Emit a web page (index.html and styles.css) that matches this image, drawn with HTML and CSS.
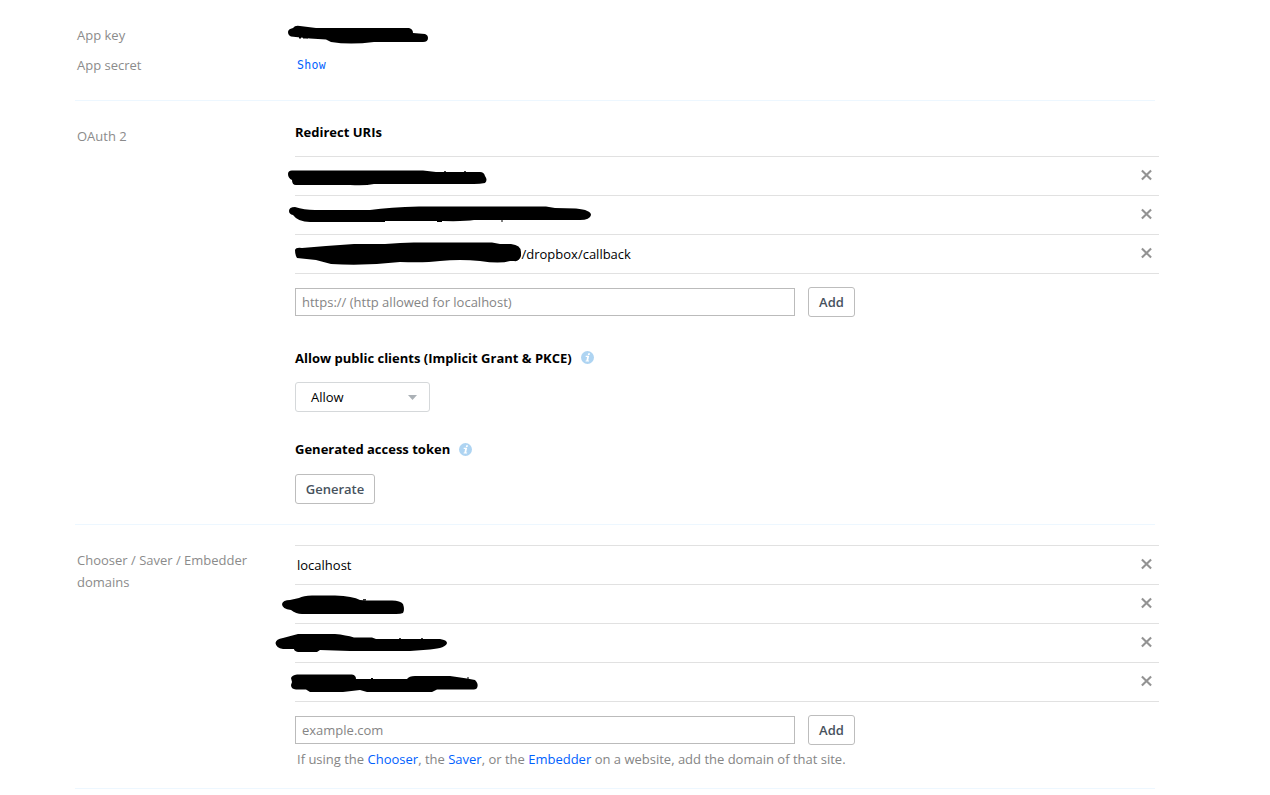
FILE: index.html
```html
<!DOCTYPE html>
<html lang="en">
<head>
<meta charset="utf-8">
<title>App settings</title>
<link rel="stylesheet" href="styles.css">
</head>
<body>
<svg class="defs" width="0" height="0">
  <symbol id="close" viewBox="0 0 13 12"><path d="M1.9 1.4 11.1 10.6M11.1 1.4 1.9 10.6" fill="none" stroke="#939393" stroke-width="2.1"/></symbol>
  <symbol id="info" viewBox="0 0 13 13"><circle cx="6.5" cy="6.5" r="6.5" fill="#aed4f2"/><path d="M7.2 2.200h1.800l-.4 1.800H6.800zM4.800 4.800h3.400L7.200 9.400h1l-.2 1.200H4.500l.2-1.200h.7l.7-3.400H4.600z" fill="#fff"/></symbol>
</svg>
<main class="settings">
  <section class="section section-keys">
    <div class="field">
      <div class="label">App key</div>
      <div class="value redacted">
        <svg class="mark" viewBox="270 20 370 30"><path d="M288 32Q288 29 293 28Q295 25 300 26L316 28H409Q413 29 413 33L425 34Q428 35 428 38Q428 42 423 42H374Q350 45 331 42L326 39.500L310 38.500L291 36.500Q288 35 288 32Z"/><path d="M299 37h2v1.500h-2zM303 37h5v1.500h-5z"/></svg>
      </div>
    </div>
    <div class="field">
      <div class="label">App secret</div>
      <div class="value"><a class="show" href="#">Show</a></div>
    </div>
  </section>

  <section class="section section-oauth">
    <div class="label">OAuth 2</div>
    <div class="content">
      <h3 class="heading">Redirect URIs</h3>
      <ul class="list">
        <li class="item redacted">
          <svg class="mark" viewBox="270 157 370 38"><path d="M288 174Q288 170 293 170.500H423L436 172H480Q484 172 485 176Q488 180 485 183Q480 184 474 184L374 184Q365 186 350 185H296Q292 185 292 180Q288 178 288 174Z"/><path d="M444 171.300h2v1h-2zM464 171.300h2v1h-2z"/></svg>
          <svg class="close"><use href="#close"/></svg>
        </li>
        <li class="item redacted">
          <svg class="mark" viewBox="270 196 370 38"><path d="M289 211Q289 207 295 207Q304 210 315 210H370Q390 207 419 206.500H546L555 208L576 208.500Q591 210 591 215Q590 220 580 220H474Q465 221.500 443 221H385L380 222H310Q298 222 293 215Q289 214 289 211Z"/><path d="M501.500 219h1v3h-1zM437 220h5v2h-5zM380 220h5v2h-5z"/></svg>
          <svg class="close"><use href="#close"/></svg>
        </li>
        <li class="item redacted">
          <svg class="mark" viewBox="270 235 370 38"><path d="M295 250Q296 247 302 248L326 246L354 244H385Q405 242 420 242.500H492L500 244H511Q521 245 521 252V256Q519 262 514 261L510 261Q500 264 480 261Q460 259 440 261Q425 263 400 262Q365 266 331 264L316 260L297 258Q295 255 295 250Z"/></svg>
          <span class="uri-tail">/dropbox/callback</span>
          <svg class="close"><use href="#close"/></svg>
        </li>
      </ul>
      <div class="add-row">
        <input class="text-input" type="text" placeholder="https:// (http allowed for localhost)">
        <button class="button button-add" type="button">Add</button>
      </div>
      <h3 class="heading heading-clients">Allow public clients (Implicit Grant &amp; PKCE) <svg class="info"><use href="#info"/></svg></h3>
      <div class="select"><span>Allow</span><svg class="caret" viewBox="0 0 9 5"><path d="M0 0h9L4.500 5z"/></svg></div>
      <h3 class="heading heading-token">Generated access token <svg class="info"><use href="#info"/></svg></h3>
      <button class="button button-generate" type="button">Generate</button>
    </div>
  </section>

  <section class="section section-domains">
    <div class="label">Chooser / Saver / Embedder domains</div>
    <div class="content">
      <ul class="list">
        <li class="item"><span>localhost</span><svg class="close"><use href="#close"/></svg></li>
        <li class="item redacted">
          <svg class="mark" viewBox="270 585 370 38"><path d="M282 604Q283 600 290 600L299 598Q304 595 315 595.500H335Q353 596 360 600L366 600.500H390Q400 600 403 604Q405 610 403 613Q401 614 396 614H302Q296 614 291 610Q282 609 282 604Z"/><path d="M363 599.200h3v1.300h-3z"/></svg>
          <svg class="close"><use href="#close"/></svg>
        </li>
        <li class="item redacted">
          <svg class="mark" viewBox="270 624 370 38"><path d="M275.500 643Q276 639 283 638L298 634H335Q346 635 354 637.500H372L376 639H440Q447 640 447 643Q446 648 430 649.500L410 651H350L320 650L317 652H298Q294 651 294 649H283Q276 648 275.500 643Z"/><path d="M399 638.300h2v1h-2zM421 638.300h2v1h-2z"/></svg>
          <svg class="close"><use href="#close"/></svg>
        </li>
        <li class="item redacted">
          <svg class="mark" viewBox="270 663 370 38"><path d="M291 678Q292 675 297 674.500H352Q356 675 356 679H407Q409 676 415 676H450L467 678.500L475 680Q479 684 477 688Q476 689.500 472 689.500H437L432 692H367L360 690L343 692H310L306 689.500H296Q291 689 291 685L292 682Z"/><path d="M371 678h2v1h-2zM467.500 677h1v2h-1z"/></svg>
          <svg class="close"><use href="#close"/></svg>
        </li>
      </ul>
      <div class="add-row">
        <input class="text-input" type="text" placeholder="example.com">
        <button class="button button-add" type="button">Add</button>
      </div>
      <p class="hint">If using the <a href="#">Chooser</a>, the <a href="#">Saver</a>, or the <a href="#">Embedder</a> on a website, add the domain of that site.</p>
    </div>
  </section>
</main>
</body>
</html>
```
FILE: styles.css
```css
* { box-sizing: border-box; }
body {
  margin: 0;
  background: #fff;
  color: #000;
  font: 13px/22px "Open Sans", "Noto Sans", sans-serif;
  overflow: hidden;
}
a { color: #0061fe; text-decoration: none; }
.defs { position: absolute; }
.settings { width: 1080px; margin-left: 75px; }
.section { border-bottom: 1px solid #edf7ff; }
.section-keys { height: 101px; padding-top: 20px; }
.section-oauth { display: flex; height: 424px; padding-top: 20px; }
.section-domains { display: flex; height: 264px; padding-top: 20px; }
.field { display: flex; height: 30px; align-items: center; }
.label { flex: none; width: 220px; padding: 0 40px 0 2px; color: #8b8b8b; }
.section-oauth .label { padding-top: 4px; }
.section-domains .label { padding-top: 4px; }
.value { flex: none; width: 864px; height: 30px; padding-left: 2px; line-height: 30px; }
.show { display: block; font-family: "DejaVu Sans Mono", monospace; font-size: 11.5px; line-height: 31px; letter-spacing: .3px; }
.content { flex: none; width: 864px; }
.heading { display: flex; align-items: center; margin: 0; font-size: 13px; font-weight: 700; line-height: 22px; }
.section-oauth .list { margin-top: 13px; }
.list { margin: 0; padding: 0; list-style: none; border-top: 1px solid #e1e1e1; }
.item { display: flex; align-items: center; height: 39px; padding: 0 6px 0 2px; border-bottom: 1px solid #e1e1e1; }
.redacted { position: relative; }
.mark { position: absolute; left: -25px; top: 0; width: 370px; height: 100%; fill: #000; }
.uri-tail { margin-left: 224.5px; }
.close { width: 13px; height: 12px; margin: 0 0 2px auto; }
.add-row { display: flex; align-items: center; gap: 13px; height: 30px; margin-top: 13px; }
.text-input {
  width: 500px; height: 28px; margin: 0; padding: 0 6px;
  border: 1px solid #bbb; border-radius: 0; background: #fff; font: inherit;
}
.text-input::placeholder { color: #858585; opacity: 1; }
.button {
  height: 30px; padding: 0; border: 1px solid #bdbdbd; border-radius: 3px;
  background: #fff; color: #47525d; font: 600 13px/28px "Open Sans", "Noto Sans", sans-serif;
}
.button-add { width: 47px; }
.button-generate { display: block; width: 80px; margin-top: 14px; }
.info { width: 13px; height: 13px; margin-left: 9px; }
.heading-clients { margin-top: 30px; }
.heading-clients .info { margin-bottom: 1px; }
.heading-token { margin-top: 26px; }
.select {
  display: flex; align-items: center; justify-content: space-between;
  width: 135px; height: 30px; margin-top: 13px; padding: 0 12px 0 15px;
  border: 1px solid #d5d8da; border-radius: 3px;
}
.caret { width: 9px; height: 5px; fill: #abb1b6; }
.hint { margin: 3px 0 0; padding-left: 2px; color: #858585; white-space: nowrap; }
```
